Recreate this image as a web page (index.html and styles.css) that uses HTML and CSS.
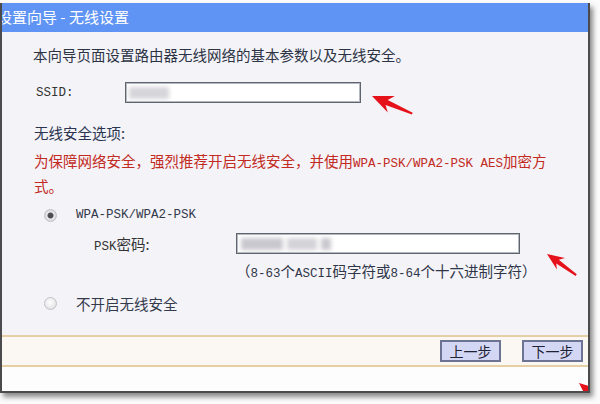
FILE: index.html
```html
<!DOCTYPE html>
<html lang="zh-CN">
<head>
    <meta charset="UTF-8">
    <title>设置向导 - 无线设置</title>
    <link rel="stylesheet" href="styles.css">
</head>
<body>
    <div class="window">
        <div class="titlebar">设置向导 - 无线设置</div>

        <div class="content">
            <div class="intro">本向导页面设置路由器无线网络的基本参数以及无线安全。</div>

            <div class="field-row">
                <span class="label mono">SSID:</span>
                <span class="input ssid"><span class="blur b1"></span></span>
            </div>

            <div class="section-title">无线安全选项:</div>
            <div class="warn">为保障网络安全，强烈推荐开启无线安全，并使用<span class="mono">WPA-PSK/WPA2-PSK AES</span>加密方<br>式。</div>

            <div class="option">
                <span class="radio checked"></span>
                <span class="mono">WPA-PSK/WPA2-PSK</span>
            </div>

            <div class="field-row psk-row">
                <span class="label psk-label"><span class="mono">PSK</span>密码:</span>
                <span class="input psk">
                    <span class="blur b2"></span>
                    <span class="blur b3"></span>
                    <span class="blur b4"></span>
                </span>
            </div>
            <div class="hint">（<span class="mono">8-63</span>个<span class="mono">ASCII</span>码字符或<span class="mono">8-64</span>个十六进制字符）</div>

            <div class="option option-off">
                <span class="radio"></span>
                <span>不开启无线安全</span>
            </div>
        </div>

        <div class="btnbar">
            <button class="btn">上一步</button>
            <button class="btn">下一步</button>
        </div>

        <div class="footer"></div>

        <!-- red marker arrows drawn over the screenshot -->
        <svg class="marks" width="590" height="390" viewBox="0 0 590 390">
            <g fill="#e5121b">
                <polygon transform="translate(370 93) rotate(23)" points="0,0 21,-9 16,-2.5 44,-0.5 44,1.5 16,3 21,9"/>
                <polygon transform="translate(545 251) rotate(35)" points="0,0 17,-7 13,-2 36,-0.5 36,1.5 13,2.5 17,7"/>
                <polygon transform="translate(577 380) rotate(40)" points="0,0 21,-9 16,-2.5 44,-0.5 44,1.5 16,3 21,9"/>
            </g>
        </svg>
    </div>
</body>
</html>
```

FILE: styles.css
```css
body {
    margin: 0;
    width: 600px;
    height: 404px;
    overflow: hidden;
    background-color: #fbfbfb;
    font-family: "Noto Sans CJK SC", "Noto Sans", sans-serif;
    color: #2f3647;
}
.window {
    position: relative;
    margin-top: 3px;
    width: 586px;
    height: 388px;
    border-left: 2px solid #4b4b4e;
    border-right: 2px solid #4b4b4e;
    border-bottom: 2px solid #4b4b4e;
    box-shadow: 3px 4px 5px rgba(0, 0, 0, 0.45);
    overflow: hidden;
    background-color: #fdfcfd;
}
.titlebar {
    height: 29px;
    line-height: 28px;
    background-color: #6094f4;
    color: #fff;
    font-size: 15px;
    margin-left: -5px;
    white-space: nowrap;
}
.content {
    height: 303px;
    box-sizing: border-box;
    padding: 13px 20px 0 32px;
    background-color: #f4f3f8;
    font-size: 14.5px;
}
.mono {
    font-family: "Liberation Mono", "DejaVu Sans Mono", monospace;
    font-size: 12.5px;
}
.intro {
    line-height: 20px;
    margin-left: -1px;
    color: #2c3345;
}
.field-row {
    display: flex;
    align-items: center;
    height: 21px;
    margin-top: 17px;
}
.label {
    width: 89px;
    padding-left: 2px;
    color: #333;
}
.input {
    position: relative;
    display: block;
    height: 21px;
    box-sizing: border-box;
    background-color: #fff;
    border: 1px solid #5f646d;
    box-shadow: inset 0 0 0 1px #b4b8c0;
    overflow: hidden;
}
.ssid {
    width: 236px;
}
.psk {
    width: 284px;
}
.blur {
    position: absolute;
    top: 4px;
    height: 12px;
    background-color: #c9c8ce;
    filter: blur(2px);
}
.b1 { left: 3px; width: 40px; background-color: #d6d5da; }
.b2 { left: 4px; width: 42px; }
.b3 { left: 50px; width: 30px; background-color: #d4d3d8; }
.b4 { left: 84px; width: 10px; }
.section-title {
    line-height: 20px;
    margin-top: 20px;
    color: #2a3350;
}
.warn {
    line-height: 22px;
    margin-top: 7px;
    color: #c22a22;
}
.option {
    display: flex;
    align-items: center;
    height: 20px;
    margin-top: 8px;
    margin-left: 10px;
    gap: 19px;
    color: #333a4c;
}
.option-off {
    margin-top: 9px;
}
.radio {
    width: 13px;
    height: 13px;
    box-sizing: border-box;
    border-radius: 50%;
    border: 1px solid #c2c2c6;
    background: radial-gradient(circle at 45% 40%, #ffffff, #d9d9dd);
}
.radio.checked {
    background: radial-gradient(circle, #4d4d52 0 2.5px, #ededf0 3.5px, #cfcfd4 6px);
}
.psk-row {
    margin-top: 8px;
}
.psk-label {
    width: 142px;
    padding-left: 60px;
    box-sizing: border-box;
    width: 202px;
}
.hint {
    line-height: 20px;
    margin-top: 7px;
    margin-left: 202px;
    color: #2f3647;
}
.btnbar {
    display: flex;
    justify-content: flex-end;
    align-items: center;
    gap: 21px;
    height: 28px;
    padding-right: 5px;
    border-top: 2px solid #e6cfa4;
    border-bottom: 2px solid #e6cfa4;
    background-color: #fbf8f4;
}
.btn {
    width: 61px;
    height: 22px;
    padding: 0;
    font-family: "Noto Sans CJK SC", sans-serif;
    font-size: 14px;
    line-height: 18px;
    color: #1e2233;
    background-color: #d4d7f4;
    border: 2px solid #6d7393;
}
.footer {
    height: 24px;
    background-color: #fefdfd;
}
.marks {
    position: absolute;
    left: 0;
    top: 0;
}
```
